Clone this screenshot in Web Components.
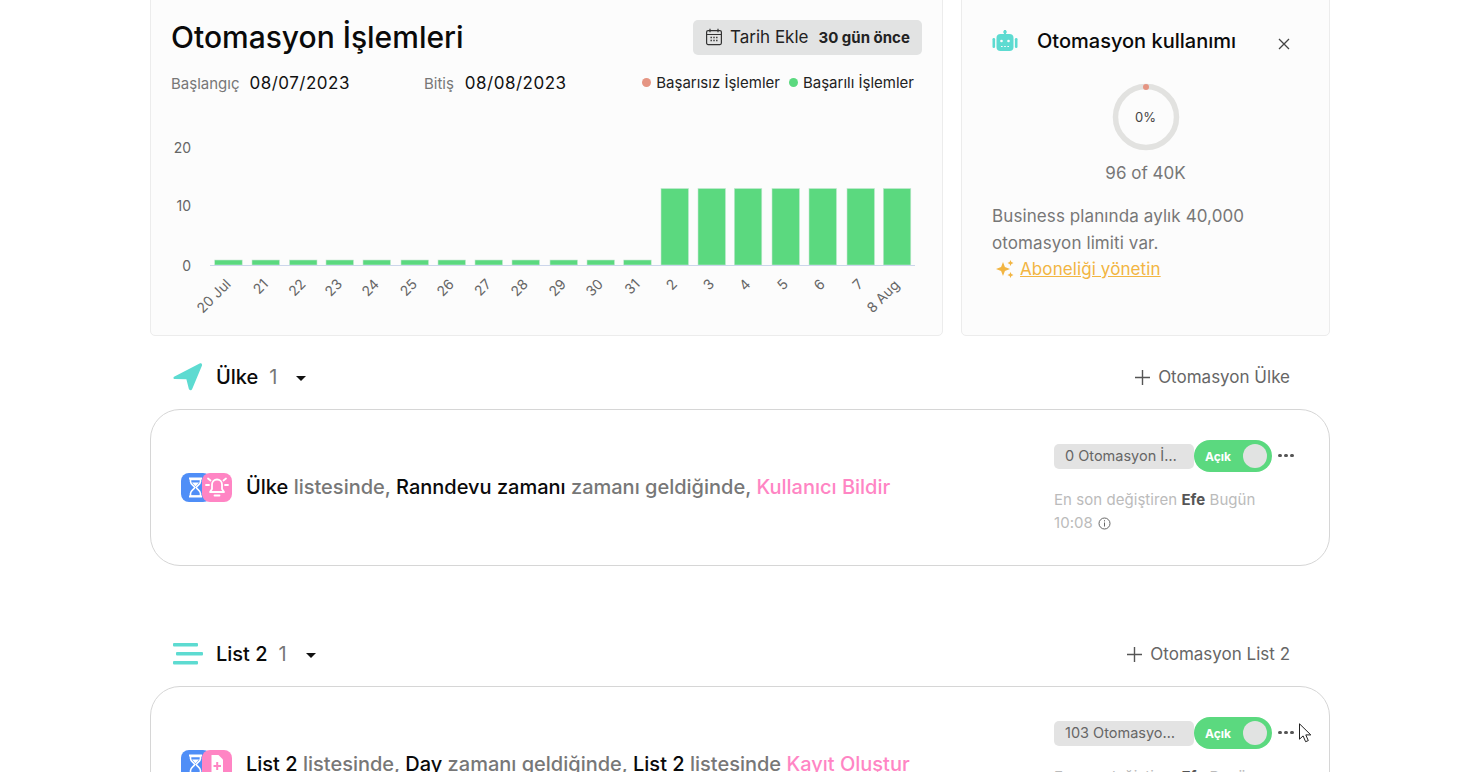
<!DOCTYPE html>
<html lang="tr">
<head>
<meta charset="utf-8">
<title>Otomasyon</title>
<style>
	html, body { margin: 0; height: 772px; overflow: hidden; background: #fff; }
	body { font-family: "Inter", "Liberation Sans", sans-serif; color: #000; }
</style>
</head>
<body>
<automation-page>
	<div slot="top">
		<stats-card></stats-card>
		<usage-card></usage-card>
	</div>

	<list-header name="Ülke" count="1" action="Otomasyon Ülke" icon="plane"></list-header>
	<automation-card icon="bell" pill="0 Otomasyon İşlemi" time="10:08">
		<b>Ülke</b> listesinde, <b>Ranndevu zamanı</b> zamanı geldiğinde, <em>Kullanıcı Bildir</em>
	</automation-card>

	<list-header name="List 2" count="1" action="Otomasyon List 2" icon="list" class="second"></list-header>
	<automation-card icon="doc" pill="103 Otomasyon İşlemi" time="10:08">
		<b>List 2</b> listesinde, <b>Day</b> zamanı geldiğinde, <b>List 2</b> listesinde <em>Kayıt Oluştur</em>
	</automation-card>
</automation-page>

<script>
class AutomationPage extends HTMLElement {
	constructor(){
		super();
		this.shadowDom = this.attachShadow({mode: 'open'});
		this.shadowDom.innerHTML = `
			<style>
				:host {
					display: block;
					position: relative;
					width: 1180px;
					margin: -20px 0 0 150px;
				}
				.cursor {
					position: absolute;
					left: 1149px;
					top: 743px;
				}
				::slotted([slot="top"]) {
					display: flex;
					gap: 18px;
					margin-bottom: 24px;
				}
			</style>
			<slot name="top"></slot>
			<slot></slot>
			<svg class="cursor" width="14" height="20" viewBox="0 0 14 20">
				<path d="M.5.8v15.4l3.6-3.3 2.5 5.8 2.7-1.1-2.500-5.700h5z" fill="#fff" stroke="#222"/>
			</svg>
		`;
	}
}

class StatsCard extends HTMLElement {
	constructor(){
		super();
		this.shadowDom = this.attachShadow({mode: 'open'});
		this.shadowDom.innerHTML = `
			<style>
				:host {
					display: block;
					box-sizing: border-box;
					width: 793px;
					height: 356px;
					padding: 38px 20px 0;
					background: #fcfcfc;
					border: 1px solid #ececec;
					border-radius: 5px;
				}
				.head {
					display: flex;
					justify-content: space-between;
					align-items: center;
					height: 36px;
				}
				h1 {
					margin: 0;
					font-size: 30px;
					font-weight: 500;
					color: #0a0a0a;
				}
				.date-btn {
					display: flex;
					align-items: center;
					box-sizing: border-box;
					width: 229px;
					height: 35px;
					padding-left: 12px;
					background: #e2e3e3;
					border-radius: 5px;
					font-size: 17px;
					color: #222;
				}
				.date-btn svg { margin-right: 7px; }
				.date-btn b {
					margin-left: 10px;
					font-size: 15px;
					font-weight: 700;
				}
				.range {
					display: flex;
					align-items: center;
					height: 20px;
					margin-top: 18px;
					font-size: 15px;
					color: #777;
				}
				.range .value {
					margin-left: 10px;
					font-size: 17px;
					color: #111;
					letter-spacing: .5px;
				}
				.range .end { margin-left: 74px; }
				.range .end + .value { margin-left: 11px; }
				.legend {
					display: flex;
					align-items: center;
					margin: 0 8px 2px auto;
					font-size: 15px;
					color: #222;
				}
				.legend i {
					width: 9px;
					height: 9px;
					margin: 0 5px 0 9px;
					border-radius: 50%;
				}
				usage-chart { margin: 27px 0 0 -20px; }
			</style>
			<div class="head">
				<h1>Otomasyon İşlemleri</h1>
				<div class="date-btn">
					<svg width="18" height="18" viewBox="0 0 18 18" fill="none" stroke="#333" stroke-width="1.2">
						<rect x="1.6" y="2.6" width="14.8" height="14" rx="1.5"/>
						<path d="M1.6 6.5h14.8M5 .8v3.4M13 .8v3.4"/>
						<path d="M5.5 9.5h1.4M8.3 9.5h1.4M11.1 9.5h1.4M5.5 12.5h1.4M8.3 12.5h1.4M11.1 12.5h1.4" stroke-width="1.6"/>
					</svg>
					Tarih Ekle <b>30 gün önce</b>
				</div>
			</div>
			<div class="range">
				<span>Başlangıç</span><span class="value">08/07/2023</span>
				<span class="end">Bitiş</span><span class="value">08/08/2023</span>
				<div class="legend">
					<i style="background:#e59583"></i>Başarısız İşlemler
					<i style="background:#5bd97f"></i>Başarılı İşlemler
				</div>
			</div>
			<usage-chart></usage-chart>
		`;
	}
}

class UsageChart extends HTMLElement {
	constructor(){
		super();
		this.shadowDom = this.attachShadow({mode: 'open'});
		const starts = [214.7,252,289.5,326,363,401,438,475,512,550,587,623.7,661,698,734.3,772,809,847,883.3];
		const labels = ['20 Jul','21','22','23','24','25','26','27','28','29','30','31','2','3','4','5','6','7','8 Aug'];
		// svg sits at x=151 on the page, y roughly 120
		const bars = starts.map((x, i) => {
			const top = i < 12 ? 260 : 188.5;
			return `<rect x="${x - 151}" y="${top - 120}" width="27.5" height="${265 - top}" fill="#5bd97f" stroke="#c5e8d2" stroke-width=".6"/>`;
		}).join('');
		const ticks = starts.map((x, i) => {
			const tx = x - 151 + 17;
			const ty = i === 18 ? 166 : 165;
			return `<text x="${tx}" y="${ty}" text-anchor="end" transform="rotate(-45 ${tx} ${ty})">${labels[i]}</text>`;
		}).join('');
		this.shadowDom.innerHTML = `
			<style>
				:host { display: block; width: 790px; height: 210px; }
				svg { display: block; }
				text { font-family: "Inter", "Liberation Sans", sans-serif; font-size: 14px; fill: #666; }
			</style>
			<svg width="790" height="210" viewBox="0 0 790 210">
				<text x="40" y="33" text-anchor="end">20</text>
				<text x="40" y="91" text-anchor="end">10</text>
				<text x="40" y="151" text-anchor="end">0</text>
				${bars}
				<path d="M59 145.5h705" stroke="#ccd6eb"/>
				${ticks}
			</svg>
		`;
	}
}

class UsageCard extends HTMLElement {
	constructor(){
		super();
		this.shadowDom = this.attachShadow({mode: 'open'});
		this.shadowDom.innerHTML = `
			<style>
				:host {
					display: block;
					box-sizing: border-box;
					width: 369px;
					height: 356px;
					padding: 47px 30px 0;
					background: #fcfcfc;
					border: 1px solid #ececec;
					border-radius: 5px;
				}
				.head {
					display: flex;
					align-items: center;
					height: 26px;
				}
				h2 {
					margin: 0 0 0 19px;
					font-size: 20px;
					font-weight: 500;
					color: #0a0a0a;
					flex: 1;
				}
				.close { margin: 5px 9px 0 0; }
				.ring {
					position: relative;
					display: flex;
					align-items: center;
					justify-content: center;
					width: 68px;
					height: 68px;
					margin: 29px auto 0;
					font-size: 13px;
					color: #444;
				}
				.ring svg { position: absolute; left: 0; top: 0; }
				.of {
					margin-top: 12px;
					text-align: center;
					font-size: 17px;
					color: #777;
				}
				p {
					margin: 20px 0 0;
					font-size: 17px;
					letter-spacing: .1px;
					line-height: 27px;
					color: #777;
				}
				a {
					display: flex;
					align-items: center;
					gap: 4px;
					margin-left: 3px;
					font-size: 17px;
					letter-spacing: .1px;
					line-height: 24px;
					color: #f2b542;
					text-decoration: underline;
				}
			</style>
			<div class="head">
				<svg width="26" height="22" viewBox="0 0 26 22" fill="#5ddbd1">
					<path d="M12 0h2v4h-2z"/>
					<circle cx="13" cy="2" r="1.8"/>
					<rect x="4.5" y="4" width="17" height="17" rx="4"/>
					<rect x="0.5" y="8" width="2.6" height="10" rx="1.2"/>
					<rect x="22.9" y="8" width="2.6" height="10" rx="1.2"/>
					<circle cx="9.5" cy="11" r="1.3" fill="#fcfcfc"/>
					<circle cx="16.5" cy="11" r="1.3" fill="#fcfcfc"/>
					<path d="M9 16h1.6v1H9zM12.2 16h1.6v1h-1.6zM15.4 16H17v1h-1.6z" fill="#fcfcfc"/>
				</svg>
				<h2>Otomasyon kullanımı</h2>
				<svg class="close" width="12" height="12" viewBox="0 0 12 12" stroke="#444" stroke-width="1.3" fill="none">
					<path d="M1 1l10 10M11 1L1 11"/>
				</svg>
			</div>
			<div class="ring">
				<svg width="68" height="68" viewBox="0 0 68 68">
					<circle cx="34" cy="34" r="30.5" fill="none" stroke="#e2e2e0" stroke-width="5.5"/>
					<circle cx="34" cy="4" r="3" fill="#e59583"/>
				</svg>
				0%
			</div>
			<div class="of">96 of 40K</div>
			<p>Business planında aylık 40,000 otomasyon limiti var.</p>
			<a>
				<svg width="21" height="20" viewBox="0 0 21 20" fill="#f2b542">
					<path d="M8 3l1.900 5.100L15 10l-5.100 1.900L8 17l-1.900-5.100L1 10l5.100-1.900z"/>
					<path d="M15.500 1l.9 2.100 2.100.9-2.100.9-.9 2.100-.9-2.100-2.100-.9 2.100-.9zM15.500 13l.9 2.100 2.100.9-2.100.9-.9 2.100-.9-2.100-2.100-.9 2.100-.9z"/>
				</svg>
				Aboneliği yönetin
			</a>
		`;
	}
}

class ListHeader extends HTMLElement {
	static icons = {
		plane: `<svg width="30" height="28" viewBox="0 0 30 28" fill="#5ddbd1"><path d="M1.5 13.6L26.6.6c1.6-.8 2.9.5 2.3 2.1L19.2 26c-.7 1.7-3 1.6-3.4-.2l-2.4-9.6-11.4-.2c-1.8 0-2.1-1.6-.5-2.4z"/></svg>`,
		list: `<svg width="30" height="22" viewBox="0 0 30 22" fill="#5ddbd1"><rect y="0" width="25" height="3.4" rx="1"/><rect x="3" y="9" width="27" height="3.4" rx="1"/><rect y="18" width="25" height="3.4" rx="1"/></svg>`
	};

	connectedCallback(){
		if (this.shadowDom) return;
		this.shadowDom = this.attachShadow({mode: 'open'});
		const second = this.classList.contains('second');
		this.shadowDom.innerHTML = `
			<style>
				:host {
					display: flex;
					align-items: center;
					box-sizing: border-box;
					height: 32px;
					padding: 2px 40px 0 23px;
					margin: ${second ? '71px' : '0'} 0 17px;
				}
				.icon { display: flex; align-items: center; width: 43px; }
				.name {
					font-size: 20px;
					font-weight: 500;
					color: #0a0a0a;
				}
				.count {
					margin-left: 11px;
					font-size: 20px;
					color: #777;
				}
				.caret {
					width: 0;
					height: 0;
					margin: 2px 0 0 19px;
					border: 5px solid transparent;
					border-top-color: #111;
					border-bottom: 0;
				}
				.action {
					display: flex;
					align-items: center;
					gap: 8px;
					margin-left: auto;
					font-size: 17px;
					color: #666;
				}
			</style>
			<div class="icon">${ListHeader.icons[this.getAttribute('icon')]}</div>
			<span class="name">${this.getAttribute('name')}</span>
			<span class="count">${this.getAttribute('count')}</span>
			<span class="caret"></span>
			<div class="action">
				<svg width="15" height="15" viewBox="0 0 15 15" stroke="#555" stroke-width="1.4"><path d="M7.5 0v15M0 7.5h15"/></svg>
				${this.getAttribute('action')}
			</div>
		`;
	}
}

class AutomationCard extends HTMLElement {
	static icons = {
		bell: `<path d="M15 6.500a5 5 0 0 0-5 5V16l-2 3h14l-2-3v-4.500a5 5 0 0 0-5-5zM12.500 22.500h5M4 12h3M23 12h3M6 5.500l2.500 2M24 5.500l-2.500 2" fill="none" stroke="#fff" stroke-width="1.8" stroke-linecap="round" stroke-linejoin="round"/>`,
		doc: `<path d="M9.500 5h7l4.500 4.500V24H9.500z" fill="#fff"/><path d="M15.200 12v8M11.500 16h7.500" stroke="#ff85c4" stroke-width="2"/>`
	};

	connectedCallback(){
		if (this.shadowDom) return;
		this.shadowDom = this.attachShadow({mode: 'open'});
		const id = this.getAttribute('icon');
		this.shadowDom.innerHTML = `
			<style>
				:host {
					display: flex;
					align-items: center;
					box-sizing: border-box;
					height: 157px;
					padding: 0 35px 0 30px;
					border: 1px solid #d6d6d6;
					border-radius: 30px;
					background: #fff;
				}
				.icons {
					position: relative;
					flex: none;
					width: 51px;
					height: 29px;
					margin-right: 14px;
				}
				.icons svg { position: absolute; top: 0; }
				.icons .b { left: 0; }
				.icons .p { left: 21px; }
				.text {
					flex: 1;
					padding-bottom: 2px;
					font-size: 20px;
					font-weight: 500;
					color: #777;
					white-space: nowrap;
				}
				::slotted(b) { font-weight: 500; color: #0a0a0a; }
				::slotted(em) { font-style: normal; color: #ff85c4; }
				.side {
					flex: none;
					width: 240px;
					align-self: flex-start;
					padding-top: 30px;
				}
				.controls { display: flex; align-items: center; }
				.pill {
					box-sizing: border-box;
					width: 140px;
					height: 25px;
					padding: 0 11px;
					background: #e3e3e3;
					border-radius: 5px;
					font-size: 14.500px;
					line-height: 23px;
					color: #666;
					white-space: nowrap;
					overflow: hidden;
					text-overflow: ellipsis;
				}
				status-toggle { margin-right: 6px; }
				.dots { display: flex; gap: 2.500px; margin-bottom: 1px; }
				.dots i { width: 3.500px; height: 3.500px; border-radius: 50%; background: #555; }
				.meta {
					margin-top: 16px;
					font-size: 15px;
					letter-spacing: .05px;
					line-height: 23px;
					color: #bbb;
				}
				.meta b { font-weight: 700; color: #555; }
				.meta svg { vertical-align: -2px; margin-left: 1px; }
			</style>
			<div class="icons">
				<svg class="b" width="30" height="29" viewBox="0 0 30 29">
					<rect width="30" height="29" rx="8" fill="#4f8ef7"/>
					<path d="M8 5.500h13M8 23.500h13" stroke="#fff" stroke-width="2.200"/>
					<path d="M9.500 6.500v2c0 3 3.500 4 4.200 6-.7 2-4.200 3-4.200 6v2.500h10v-2.500c0-3-3.500-4-4.200-6 .7-2 4.200-3 4.200-6v-2z" fill="none" stroke="#fff" stroke-width="1.600"/>
					<path d="M11 9.500h7l-3.500 4z" fill="#fff"/>
				</svg>
				<svg class="p" width="30" height="29" viewBox="0 0 30 29">
					<rect width="30" height="29" rx="8" fill="#ff85c4"/>
					${AutomationCard.icons[id]}
				</svg>
			</div>
			<div class="text"><slot></slot></div>
			<div class="side">
				<div class="controls">
					<div class="pill">${this.getAttribute('pill')}</div>
					<status-toggle></status-toggle>
					<div class="dots"><i></i><i></i><i></i></div>
				</div>
				<div class="meta">
					En son değiştiren <b>Efe</b> Bugün<br>
					${this.getAttribute('time')}
					<svg width="13" height="13" viewBox="0 0 13 13" fill="none" stroke="#666"><circle cx="6.500" cy="6.500" r="5.500"/><path d="M6.500 5.500v4M6.500 3.200v1.200"/></svg>
				</div>
			</div>
		`;
	}
}

class StatusToggle extends HTMLElement {
	constructor(){
		super();
		this.shadowDom = this.attachShadow({mode: 'open'});
		this.shadowDom.innerHTML = `
			<style>
				:host {
					display: flex;
					align-items: center;
					justify-content: space-between;
					box-sizing: border-box;
					width: 78px;
					height: 32px;
					padding: 0 5px 0 11px;
					background: #5bd97f;
					border-radius: 16px;
					color: #fff;
					font-size: 12px;
					font-weight: 700;
				}
				i { width: 24px; height: 24px; border-radius: 50%; background: #e1e3e2; }
			</style>
			Açık<i></i>
		`;
	}
}

customElements.define('automation-page', AutomationPage);
customElements.define('stats-card', StatsCard);
customElements.define('usage-chart', UsageChart);
customElements.define('usage-card', UsageCard);
customElements.define('list-header', ListHeader);
customElements.define('automation-card', AutomationCard);
customElements.define('status-toggle', StatusToggle);
</script>
</body>
</html>
